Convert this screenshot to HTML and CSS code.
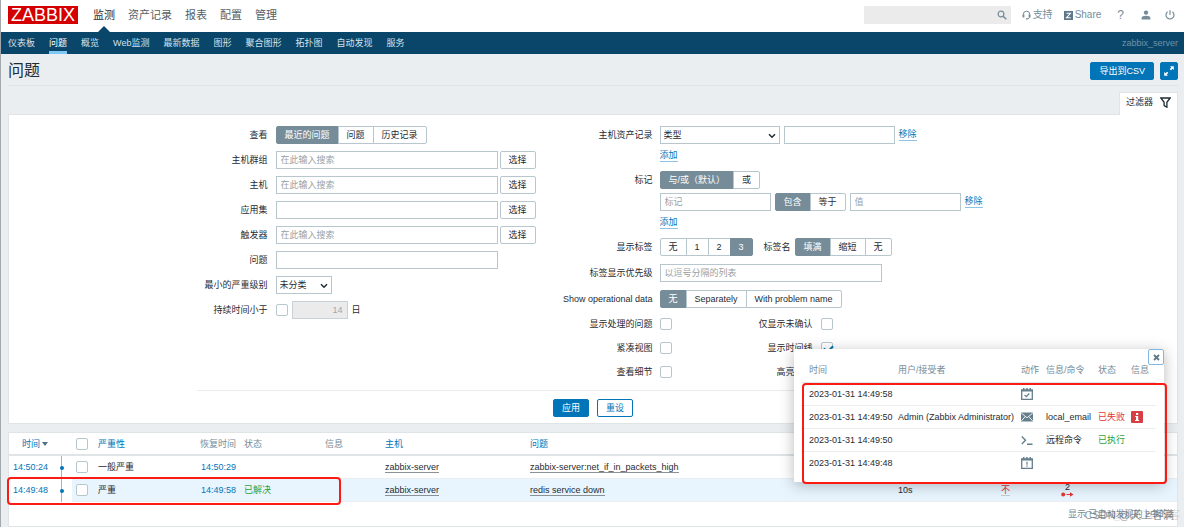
FILE: index.html
```html
<!DOCTYPE html>
<html lang="zh-CN">
<head>
<meta charset="utf-8">
<meta name="viewport" content="width=device-width, initial-scale=1">
<title>问题</title>
<link rel="stylesheet" href="styles.css">
</head>
<body>
<header class="topbar">
  <a class="logo" href="#">ZABBIX</a>
  <nav class="main-nav">
    <a class="active" href="#">监测</a>
    <a href="#">资产记录</a>
    <a href="#">报表</a>
    <a href="#">配置</a>
    <a href="#">管理</a>
  </nav>
  <div class="tools">
    <form class="search">
      <input type="text" aria-label="搜索">
      <button type="button" aria-label="搜索"><svg width="10" height="10" viewBox="0 0 10 10"><circle cx="4" cy="4" r="2.9" fill="none" stroke="currentColor" stroke-width="1.2"/><path d="M6.2 6.2 9.3 9.3" stroke="currentColor" stroke-width="1.5"/></svg></button>
    </form>
    <a class="tool support" href="#"><svg width="9" height="10" viewBox="0 0 9 10"><path d="M1.3 6.5V4.4a3.2 3.2 0 0 1 6.4 0v2.1c0 1.5-1 2.3-2.6 2.4" fill="none" stroke="currentColor"/><path d="M.6 4.6h1.8v3H.6zM6.6 4.6h1.8v3H6.6zM4 8.2h1.6v1.4H4z" fill="currentColor"/></svg>支持</a>
    <a class="tool share" href="#"><svg width="9" height="9" viewBox="0 0 9 9"><path d="M0 0h9v9H0z" fill="currentColor"/><path d="M2.4 2.3h4L2.5 6.7h4.2" fill="none" stroke="#fff" stroke-width="1.1"/></svg>Share</a>
    <a class="tool help" href="#">?</a>
    <a class="tool user" href="#" aria-label="用户"><svg width="10" height="10" viewBox="0 0 10 10"><circle cx="5" cy="2.6" r="2.2" fill="currentColor"/><path d="M.6 9.4V8c0-1.600 2-2.300 4.400-2.300S9.400 6.400 9.400 8v1.400z" fill="currentColor"/></svg></a>
    <a class="tool" href="#" aria-label="退出"><svg width="10" height="10" viewBox="0 0 10 10"><path d="M2.600 1.800a4 4 0 1 0 4.800 0M5 .2v4.600" fill="none" stroke="currentColor" stroke-width="1.200"/></svg></a>
  </div>
</header>
<nav class="sub-nav">
  <a href="#">仪表板</a>
  <a class="active" href="#">问题</a>
  <a href="#">概览</a>
  <a href="#">Web监测</a>
  <a href="#">最新数据</a>
  <a href="#">图形</a>
  <a href="#">聚合图形</a>
  <a href="#">拓扑图</a>
  <a href="#">自动发现</a>
  <a href="#">服务</a>
  <span class="server">zabbix_server</span>
</nav>

<main class="content">
  <div class="page-head">
    <h1>问题</h1>
    <button class="btn primary" type="button">导出到CSV</button>
    <button class="btn primary expand" type="button" aria-label="全屏"><svg width="12" height="12" viewBox="0 0 12 12"><path d="M7 1.200h3.800V5L9.500 3.700 7.900 5.300 6.700 4.100l1.600-1.600zM5 10.800H1.200V7l1.300 1.300 1.600-1.600 1.200 1.200-1.600 1.600z" fill="currentColor"/></svg></button>
  </div>

  <div class="filter-tab"><a href="#">过滤器<svg width="11" height="11" viewBox="0 0 11 11"><path d="M.9 1h9.200L6.900 5.300v4.900L4.100 8.600V5.300z" fill="none" stroke="#1f2c33" stroke-width="1.300"/></svg></a></div>

  <form class="filter">
    <div class="filter-grid">
      <div class="form-col left">
        <div class="row"><span class="label">查看</span>
          <div class="segmented" role="radiogroup" aria-label="查看">
            <label><input type="radio" name="show" checked><span>最近的问题</span></label>
            <label><input type="radio" name="show"><span>问题</span></label>
            <label><input type="radio" name="show"><span>历史记录</span></label>
          </div></div>
        <div class="row"><label class="label" for="groups">主机群组</label><div class="line tight"><input class="text wide" id="groups" type="text" placeholder="在此输入搜索"><button class="btn" type="button">选择</button></div></div>
        <div class="row"><label class="label" for="hosts">主机</label><div class="line tight"><input class="text wide" id="hosts" type="text" placeholder="在此输入搜索"><button class="btn" type="button">选择</button></div></div>
        <div class="row"><label class="label" for="apps">应用集</label><div class="line tight"><input class="text wide" id="apps" type="text"><button class="btn" type="button">选择</button></div></div>
        <div class="row"><label class="label" for="triggers">触发器</label><div class="line tight"><input class="text wide" id="triggers" type="text" placeholder="在此输入搜索"><button class="btn" type="button">选择</button></div></div>
        <div class="row"><label class="label" for="problem">问题</label><div class="line"><input class="text wide" id="problem" type="text"></div></div>
        <div class="row"><label class="label" for="severity">最小的严重级别</label><div class="line"><span class="select small"><select id="severity"><option>未分类</option></select><svg width="8" height="6" viewBox="0 0 8 6"><path d="m1 1.200 3 3 3-3" fill="none" stroke="currentColor" stroke-width="1.500"/></svg></span></div></div>
        <div class="row"><label class="label" for="age">持续时间小于</label><div class="line"><input class="check" id="age" type="checkbox"><input class="text days" type="text" value="14" aria-label="天数" disabled><span>日</span></div></div>
      </div>

      <div class="form-col right">
        <div class="row"><label class="label" for="inventory">主机资产记录</label>
          <div class="stack">
            <div class="line"><span class="select medium"><select id="inventory"><option>类型</option></select><svg width="8" height="6" viewBox="0 0 8 6"><path d="m1 1.200 3 3 3-3" fill="none" stroke="currentColor" stroke-width="1.500"/></svg></span><input class="text half" type="text" aria-label="资产记录值"><a class="link" href="#">移除</a></div>
            <div class="line add"><a class="link" href="#">添加</a></div>
          </div></div>
        <div class="row"><span class="label">标记</span>
          <div class="stack">
            <div class="line"><div class="segmented" role="radiogroup" aria-label="标记">
              <label><input type="radio" name="eval" checked><span>与/或（默认）</span></label>
              <label><input type="radio" name="eval"><span>或</span></label>
            </div></div>
            <div class="line tags"><input class="text half" type="text" placeholder="标记" aria-label="标记">
              <div class="segmented" role="radiogroup" aria-label="运算符">
                <label><input type="radio" name="op" checked><span>包含</span></label>
                <label><input type="radio" name="op"><span>等于</span></label>
              </div>
              <input class="text half" type="text" placeholder="值" aria-label="值"><a class="link" href="#">移除</a></div>
            <div class="line add"><a class="link" href="#">添加</a></div>
          </div></div>
        <div class="row"><span class="label">显示标签</span>
          <div class="line">
            <div class="segmented" role="radiogroup" aria-label="显示标签">
              <label><input type="radio" name="tags"><span>无</span></label>
              <label><input type="radio" name="tags"><span>1</span></label>
              <label><input type="radio" name="tags"><span>2</span></label>
              <label><input type="radio" name="tags" checked><span>3</span></label>
            </div>
            <span class="label inner">标签名</span>
            <div class="segmented" role="radiogroup" aria-label="标签名">
              <label><input type="radio" name="tagname" checked><span>填满</span></label>
              <label><input type="radio" name="tagname"><span>缩短</span></label>
              <label><input type="radio" name="tagname"><span>无</span></label>
            </div>
          </div></div>
        <div class="row"><label class="label" for="priority">标签显示优先级</label><div class="line"><input class="text wide" id="priority" type="text" placeholder="以逗号分隔的列表"></div></div>
        <div class="row"><span class="label">Show operational data</span>
          <div class="segmented" role="radiogroup" aria-label="Show operational data">
            <label><input type="radio" name="opdata" checked><span>无</span></label>
            <label><input type="radio" name="opdata"><span>Separately</span></label>
            <label><input type="radio" name="opdata"><span>With problem name</span></label>
          </div></div>
        <div class="row checks"><label class="label" for="suppressed">显示处理的问题</label><div class="pair"><input class="check" id="suppressed" type="checkbox"><label for="unack">仅显示未确认</label><input class="check" id="unack" type="checkbox"></div></div>
        <div class="row checks"><label class="label" for="compact">紧凑视图</label><div class="pair"><input class="check" id="compact" type="checkbox"><label for="timeline">显示时间线</label><input class="check" id="timeline" type="checkbox" checked></div></div>
        <div class="row checks"><label class="label" for="details">查看细节</label><div class="pair"><input class="check" id="details" type="checkbox"><label for="highlight">高亮整行</label><input class="check" id="highlight" type="checkbox"></div></div>
      </div>
    </div>
    <div class="filter-actions">
      <button class="btn primary" type="button">应用</button>
      <button class="btn outline" type="button">重设</button>
    </div>
  </form>

  <section class="problems">
    <table class="list">
      <colgroup><col class="c-time"><col class="c-dot"><col class="c-check"><col class="c-sev"><col class="c-rec"><col class="c-status"><col class="c-info"><col class="c-host"><col><col class="c-dur"><col class="c-ack"><col class="c-act"></colgroup>
      <thead>
        <tr><th class="time"><a href="#">时间<span class="sort"></span></a></th><th></th><th><input class="check" type="checkbox" aria-label="全选"></th><th><a href="#">严重性</a></th><th class="num">恢复时间</th><th>状态</th><th>信息</th><th><a href="#">主机</a></th><th><a href="#">问题</a></th><th></th><th></th><th></th></tr>
      </thead>
      <tbody>
        <tr><td class="time"><a href="#">14:50:24</a></td><td class="dot"></td><td><input class="check" type="checkbox" aria-label="选择 14:50:24"></td><td>一般严重</td><td class="num"><a href="#">14:50:29</a></td><td></td><td></td><td><a class="dotted" href="#">zabbix-server</a></td><td><a class="dotted" href="#">zabbix-server:net_if_in_packets_high</a></td><td></td><td></td><td></td></tr>
        <tr class="hover"><td class="time"><a href="#">14:49:48</a></td><td class="dot"></td><td><input class="check" type="checkbox" aria-label="选择 14:49:48"></td><td>严重</td><td class="num"><a href="#">14:49:58</a></td><td class="ok">已解决</td><td></td><td><a class="dotted" href="#">zabbix-server</a></td><td><a class="dotted" href="#">redis service down</a></td><td>10s</td><td><a class="no" href="#">不</a></td><td><button class="actions" type="button"><span>2</span><svg width="13" height="5" viewBox="0 0 13 5"><circle cx="2.200" cy="2.500" r="2" fill="currentColor"/><path d="M5.500 1.900H9V.2l3.600 2.300L9 4.800V3.100H5.500z" fill="currentColor"/></svg></button></td></tr>
      </tbody>
    </table>
    <div class="list-foot">显示 已自动发现的 2中的2</div>
    <div class="mark-row"></div>
    <div class="watermark back">@51CTO博客</div>
    <div class="watermark">CSDN @天上客满</div>
  </section>

  <aside class="popup">
    <button class="close" type="button" aria-label="关闭"><svg width="7" height="7" viewBox="0 0 7 7"><path d="m1 1 5 5M6 1 1 6" stroke="currentColor" stroke-width="1.800"/></svg></button>
    <table class="events">
      <colgroup><col class="e-time"><col><col class="e-act"><col class="e-cmd"><col class="e-status"><col class="e-info"></colgroup>
      <thead><tr><th>时间</th><th>用户/接受者</th><th>动作</th><th>信息/命令</th><th>状态</th><th>信息</th></tr></thead>
      <tbody>
        <tr><td>2023-01-31 14:49:58</td><td></td><td><svg class="ico" width="12" height="12" viewBox="0 0 12 12"><path d="M.7 2.200h10.600v9.100H.7z" fill="none" stroke="currentColor" stroke-width="1.300"/><path d="M.1 1.500h11.800v2H.1zM2 0h1.500v2H2zM5.200 0h1.500v2H5.200zM8.500 0H10v2H8.500z" fill="currentColor"/><path d="m3.600 7 1.700 1.700 3-3.200" fill="none" stroke="currentColor" stroke-width="1.200"/></svg></td><td></td><td></td><td></td></tr>
        <tr><td>2023-01-31 14:49:50</td><td>Admin (Zabbix Administrator)</td><td><svg class="ico" width="12" height="12" viewBox="0 0 12 12"><path d="M0 1.500h12v9H0z" fill="currentColor"/><path d="m.2 2 5.800 4.800L11.800 2M.3 10l3.800-4.300M11.700 10 7.900 5.700" fill="none" stroke="#fff" stroke-width=".9"/></svg></td><td>local_email</td><td class="fail">已失败</td><td><button class="info" type="button" aria-label="错误信息"><svg width="12" height="12" viewBox="0 0 12 12"><path d="M5 2h2.200v2H5zM4.200 5h3v4h.9v1H4V9h1V6h-.8z" fill="#fff"/></svg></button></td></tr>
        <tr><td>2023-01-31 14:49:50</td><td></td><td><svg class="ico" width="12" height="12" viewBox="0 0 12 12"><path d="m.8 2.500 3.700 3.700L.8 9.900M6 10.300h5.500" fill="none" stroke="currentColor" stroke-width="1.400"/></svg></td><td>远程命令</td><td class="done">已执行</td><td></td></tr>
        <tr><td>2023-01-31 14:49:48</td><td></td><td><svg class="ico" width="12" height="12" viewBox="0 0 12 12"><path d="M.7 2.200h10.600v9.100H.7z" fill="none" stroke="currentColor" stroke-width="1.300"/><path d="M.1 1.500h11.800v2H.1zM2 0h1.500v2H2zM5.200 0h1.500v2H5.200zM8.500 0H10v2H8.500zM5.400 4.700h1.200v3H5.400zM5.400 8.500h1.200v1.200H5.400z" fill="currentColor"/></svg></td><td></td><td></td><td></td></tr>
      </tbody>
    </table>
    <div class="mark-popup"></div>
  </aside>
</main>
</body>
</html>
```
FILE: styles.css
```css
* { box-sizing: border-box; }

body {
  margin: 0;
  background: #ebeef0;
  color: #1f2c33;
  font: 9px/12px "Liberation Sans", "Noto Sans CJK SC", sans-serif;
  border-left: 1px solid #a3a8ad;
}

a { color: #0275b8; text-decoration: none; }
button, input, select { font: inherit; color: inherit; margin: 0; }
svg { display: block; }

/* Header */
.topbar {
  display: flex;
  align-items: center;
  height: 32px;
  padding: 0 9px 2px 7px;
  background: #fff;
}
.logo {
  width: 70px;
  height: 18px;
  margin-right: 15px;
  background: #d40000;
  color: #fff;
  font-size: 18px;
  line-height: 19px;
  text-align: center;
}
.main-nav { display: flex; gap: 13px; font-size: 11px; line-height: 32px; }
.main-nav a { position: relative; color: #565f66; }
.main-nav a.active { color: #1f2c33; }
.main-nav a.active::after {
  content: "";
  position: absolute;
  left: 50%;
  bottom: -1px;
  margin-left: -6px;
  border: 6px solid transparent;
  border-top: 0;
  border-bottom-color: #0a466a;
}
.tools { display: flex; align-items: center; margin-left: auto; }
.search { display: flex; width: 147px; height: 18px; margin-right: 11px; background: #ebebeb; }
.search input { flex: 1; min-width: 0; border: 0; background: none; }
.search button { border: 0; padding: 0 4px; background: none; color: #768d99; }
.tool { display: flex; align-items: center; gap: 2px; color: #768d99; font-size: 10px; }
.support { margin-right: 11px; }
.share { margin-right: 16px; }
.share svg { color: #5d7888; }
.help { margin-right: 17px; font-size: 12px; }
.user { margin-right: 14px; }

.sub-nav {
  display: flex;
  gap: 14px;
  height: 22px;
  padding: 0 6px 0 7px;
  background: #0a466a;
  line-height: 22px;
}
.sub-nav a { color: #d3e2ec; height: 22px; }
.sub-nav a.active { color: #fff; border-bottom: 3px solid #7fc8f5; }
.server { margin-left: auto; color: #6f93a8; }

/* Page */
.content { padding: 0 6px 0 7px; }
.page-head {
  display: flex;
  align-items: center;
  gap: 6px;
  height: 32px;
  padding-top: 3px;
  border-bottom: 1px solid #dfe4e7;
}
h1 { flex: 1; margin: 0; font-size: 16px; font-weight: 400; line-height: 24px; }

.btn {
  height: 18px;
  padding: 0 8px;
  border: 1px solid #b8c6cd;
  border-radius: 2px;
  background: #fff;
  line-height: 16px;
  white-space: nowrap;
}
.primary { background: #0275b8; border-color: #0275b8; color: #fff; }
.outline { border-color: #0275b8; color: #0275b8; }
.expand { padding: 0 2px; }

.filter-tab { display: flex; justify-content: flex-end; padding-top: 6px; }
.filter-tab a {
  display: flex;
  align-items: center;
  gap: 7px;
  height: 23px;
  padding: 0 6px 4px;
  border: 1px solid #dfe4e7;
  border-bottom: 0;
  background: #fff;
  color: #1f2c33;
  position: relative;
  z-index: 1;
}
.filter { margin-top: -1px; padding: 11px 0 6px; border: 1px solid #dfe4e7; background: #fff; }
.filter-grid {
  display: grid;
  grid-template-columns: 347px 446px;
  justify-content: center;
  width: 793px;
  max-width: 100%;
  margin: 0 auto;
  padding-bottom: 10px;
  border-bottom: 1px solid #e8ecee;
}
.form-col { display: flex; flex-direction: column; gap: 7px; }
.form-col.right { gap: 8px; }
.row { display: grid; gap: 8px; align-items: start; }
.left .row { grid-template-columns: 71px 1fr; }
.right .row { grid-template-columns: 109px 1fr; column-gap: 7px; }
.label { line-height: 18px; text-align: right; white-space: nowrap; }
.label.inner { margin: 0 0 0 7px; }
.line { display: flex; align-items: center; gap: 4px; }
.line.tight { gap: 2px; }
.stack { display: grid; gap: 4px; }
.add { height: 15px; }

.text {
  height: 18px;
  padding: 0 4px;
  border: 1px solid #b8c6cd;
  border-radius: 0;
  background: #fff;
}
.text::placeholder { color: #9a9fa3; opacity: 1; }
.wide { width: 222px; }
.half { width: 111px; }
.days { width: 56px; text-align: right; background: #ebebeb; border-color: #c8d1d6; color: #a0a8ad; }

.select { position: relative; }
.select select {
  display: block;
  width: 100%;
  height: 18px;
  padding: 0 3px;
  border: 1px solid #b8c6cd;
  border-radius: 0;
  background: #fff;
  appearance: none;
}
.select svg { position: absolute; right: 4px; top: 7px; pointer-events: none; }
.small { width: 56px; }
.medium { width: 120px; }

.segmented { display: flex; height: 18px; }
.segmented label { position: relative; }
.segmented label + label { margin-left: -1px; }
.segmented input { position: absolute; inset: 0; opacity: 0; }
.segmented span {
  display: block;
  height: 18px;
  padding: 0 8px;
  border: 1px solid #b8c6cd;
  line-height: 16px;
  white-space: nowrap;
}
.segmented label:first-child span { border-radius: 2px 0 0 2px; }
.segmented label:last-child span { border-radius: 0 2px 2px 0; }
.segmented input:checked + span { background: #768d99; border-color: #768d99; color: #fff; }

.link { border-bottom: 1px solid #8fc3e3; line-height: 11px; }

.check {
  appearance: none;
  display: block;
  width: 12px;
  height: 12px;
  border: 1px solid #b8c6cd;
  border-radius: 2px;
  background: #fff;
}
.check:checked::after {
  content: "";
  display: block;
  width: 7px;
  height: 4px;
  margin: 2px 0 0 2px;
  border: solid #0275b8;
  border-width: 0 0 2px 2px;
  transform: rotate(-45deg);
}
.checks .label { line-height: 16px; }
.pair { display: grid; grid-template-columns: 12px 133px 12px; gap: 8px; align-items: center; height: 16px; }
.pair label { text-align: right; }
.filter-actions { display: flex; justify-content: center; gap: 8px; padding-top: 8px; }

/* Problem list */
.problems { position: relative; margin-top: 8px; border: 1px solid #dfe4e7; background: #fff; }
.list, .events { width: 100%; border-collapse: collapse; table-layout: fixed; }
.list th, .list td, .events th, .events td {
  padding: 0 4px;
  font-weight: 400;
  text-align: left;
  white-space: nowrap;
}
.list th { height: 22px; color: #768d99; border-bottom: 2px solid #dfe4e7; }
.list td { height: 23px; border-bottom: 1px solid #ebeef0; }
.list .num { text-align: right; }
.list .time { text-align: right; padding-right: 13px; }
.list td.time { border-right: 1px solid #7fc0ea; border-bottom-color: transparent; }
.list td.dot { position: relative; border-bottom-color: transparent; }
.dot::before {
  content: "";
  position: absolute;
  left: -2px;
  top: 10px;
  width: 4px;
  height: 4px;
  border-radius: 50%;
  background: #0275b8;
}
.hover td { background: #e8f5ff; }
.hover td.time, .hover td.dot { background: #fff; }
.c-time { width: 52px; }
.c-dot { width: 11px; }
.c-check { width: 22px; }
.c-sev { width: 87px; }
.c-rec { width: 59px; }
.c-status { width: 81px; }
.c-info { width: 60px; }
.c-host { width: 145px; }
.c-dur { width: 103px; }
.c-ack { width: 60px; }
.c-act { width: 120px; }
.sort {
  display: inline-block;
  margin-left: 2px;
  border: 3px solid transparent;
  border-top: 4px solid #4f7185;
  border-bottom: 0;
  vertical-align: 1px;
}
.dotted { color: #1f2c33; border-bottom: 1px solid #8a9298; }
.ok, .done { color: #2f9f3b; }
.no, .fail { color: #e33734; }
.no { border-bottom: 1px solid #c3cdd3; }
.actions {
  display: grid;
  justify-items: center;
  width: 13px;
  padding: 0;
  border: 0;
  background: none;
  line-height: 9px;
}
.actions svg { color: #e33734; }
.list-foot { height: 24px; padding: 0 4px; color: #768d99; line-height: 24px; text-align: right; }
.watermark {
  position: absolute;
  right: 3px;
  bottom: 3px;
  color: rgba(90, 95, 100, 0.65);
  font-size: 11px;
  line-height: 16px;
}
.watermark.back { right: -3px; color: rgba(150, 155, 160, 0.35); }

/* Event popup */
.popup {
  position: absolute;
  top: 349px;
  right: 20px;
  width: 370px;
  padding: 9px 8px 8px 7px;
  background: #fff;
  box-shadow: 0 3px 14px rgba(0, 0, 0, 0.28);
}
.events th { height: 24px; color: #768d99; border-bottom: 1px solid #dfe4e7; }
.events td { height: 23px; border-bottom: 1px solid #ebeef0; }
.events tr:last-child td { border-bottom: 0; }
.events th:first-child, .events td:first-child { padding-left: 8px; }
.e-time { width: 93px; }
.e-act { width: 25px; }
.e-cmd { width: 52px; }
.e-status { width: 33px; }
.e-info { width: 29px; }
.ico { color: #647e8c; }
.info { display: block; padding: 0; border: 0; border-radius: 1px; background: #d64045; }
.close {
  position: absolute;
  top: 0;
  right: 0;
  display: grid;
  place-items: center;
  width: 16px;
  height: 16px;
  padding: 0;
  border: 1px solid #7fb7e2;
  border-radius: 2px;
  background: #fff;
  color: #5d7888;
}

/* Highlight frames */
.mark-popup, .mark-row { position: absolute; border: 2px solid #fb1b12; border-radius: 4px; pointer-events: none; }
.mark-popup { left: 8px; right: -3px; top: 34px; bottom: -2px; }
.mark-row { left: -2px; top: 44px; width: 334px; height: 28px; }
```
